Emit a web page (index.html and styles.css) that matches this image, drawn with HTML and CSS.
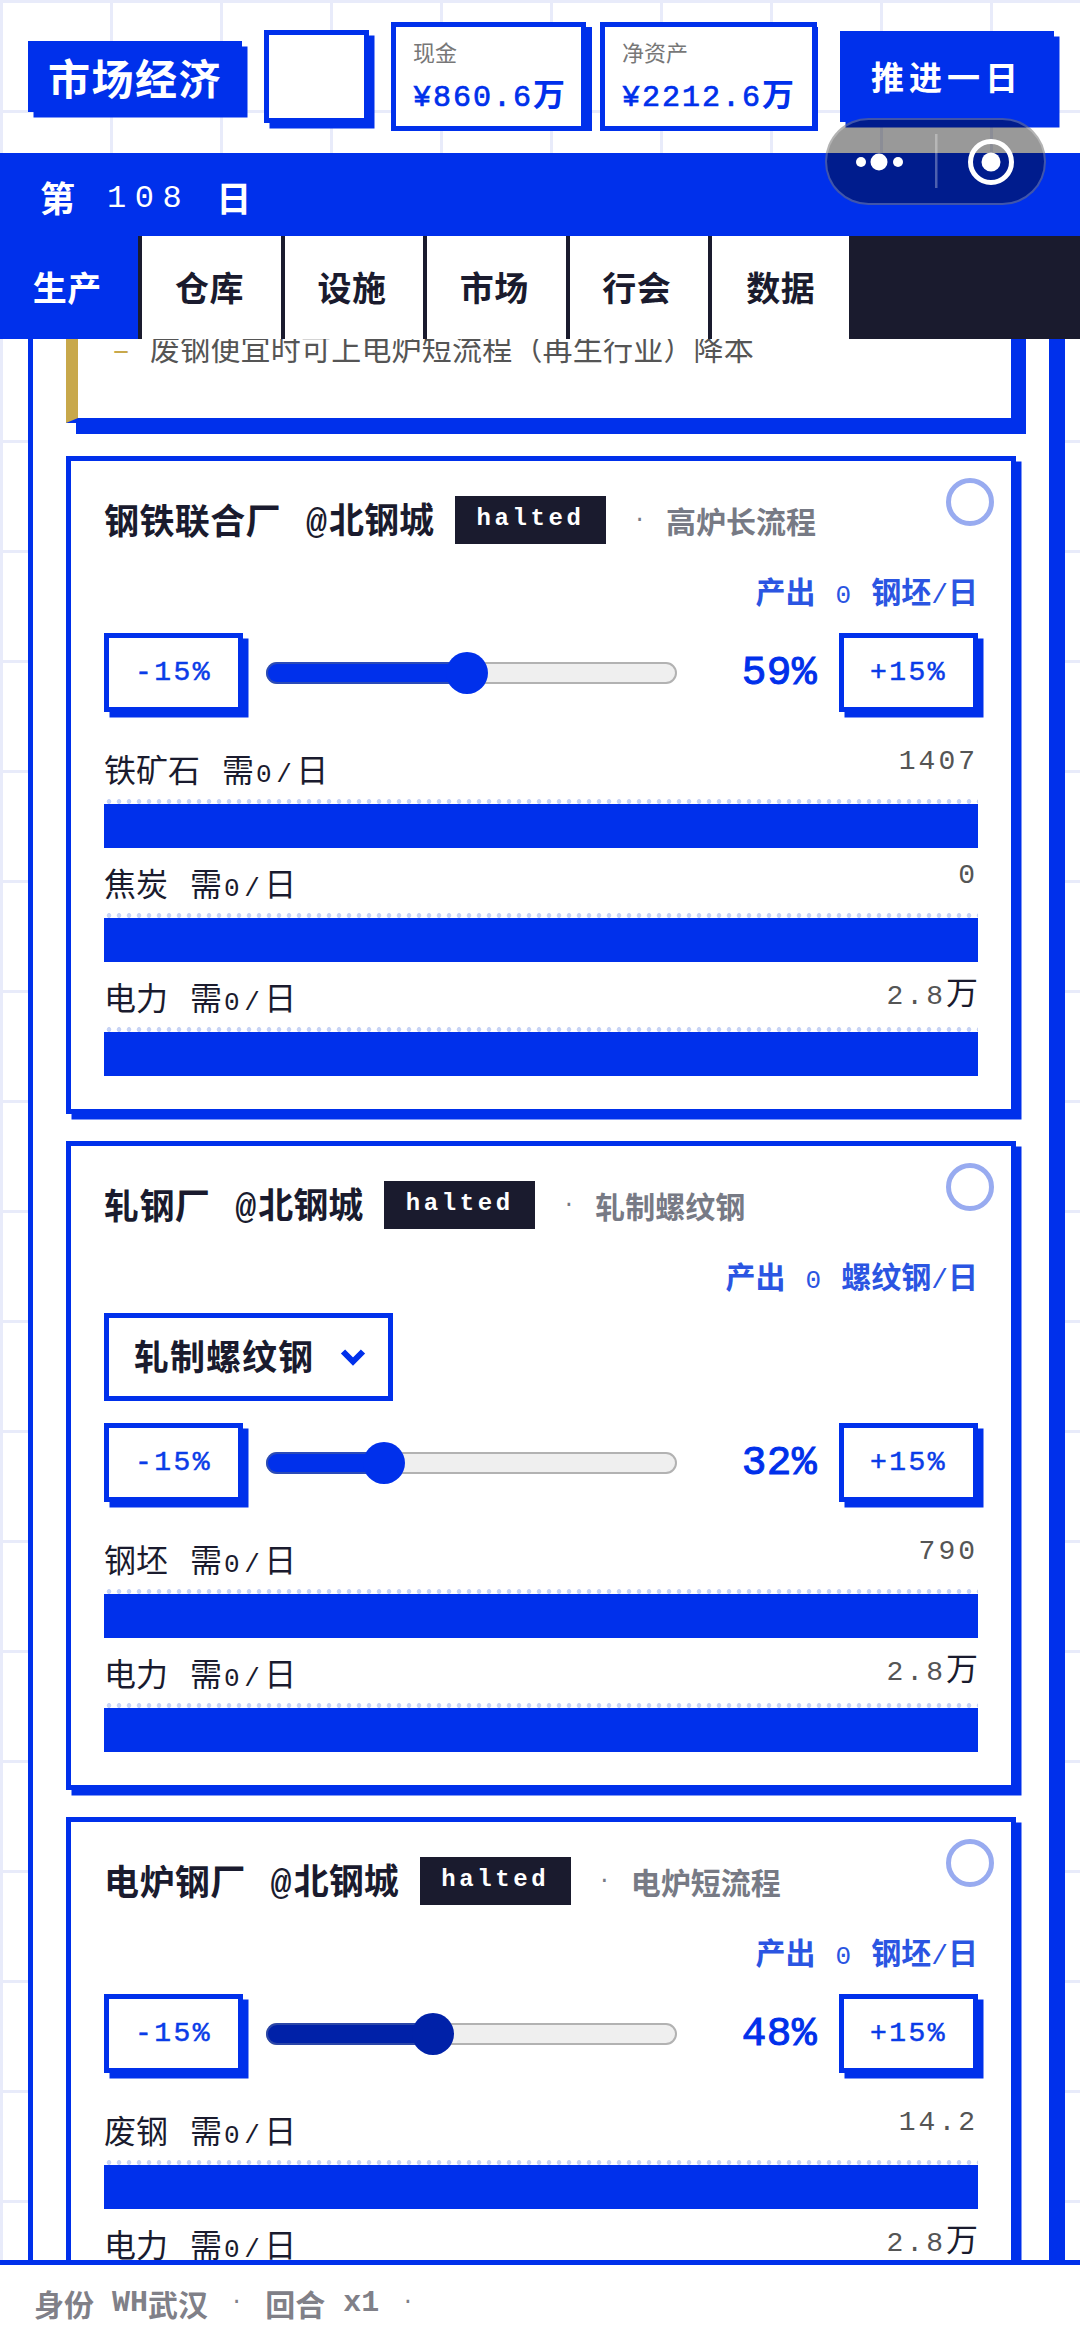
FILE: index.html
```html
<!DOCTYPE html>
<html lang="zh-CN">
<head>
    <meta charset="UTF-8">
    <meta name="viewport" content="width=device-width, initial-scale=1.0">
    <title>市场经济</title>
    <link rel="stylesheet" href="styles.css">
</head>
<body>
    <!-- Top bar -->
    <header class="header">
        <div class="top-row">
            <h1 class="brand">市场经济</h1>
            <div class="logo-box"></div>
            <div class="stats">
                <div class="stat">
                    <div class="stat-label">现金</div>
                    <div class="stat-value"><span class="num">¥860.6</span>万</div>
                </div>
                <div class="stat">
                    <div class="stat-label">净资产</div>
                    <div class="stat-value"><span class="num">¥2212.6</span>万</div>
                </div>
            </div>
            <button class="next-btn">推进一日</button>
        </div>
        <div class="day-band">
            <span>第</span>
            <span class="day-num">108</span>
            <span>日</span>
        </div>
        <nav class="tabs">
            <div class="tab active">生产</div>
            <div class="tab">仓库</div>
            <div class="tab">设施</div>
            <div class="tab">市场</div>
            <div class="tab">行会</div>
            <div class="tab last">数据</div>
        </nav>
        <!-- Mini program capsule -->
        <div class="capsule">
            <svg width="217" height="83" viewBox="0 0 217 83">
                <circle cx="34" cy="42" r="5" fill="#fff"/>
                <circle cx="52" cy="42" r="8.5" fill="#fff"/>
                <circle cx="71" cy="42" r="5" fill="#fff"/>
                <rect x="108" y="14" width="2.5" height="54" fill="#fff" opacity="0.3"/>
                <circle cx="164" cy="42" r="20.5" fill="none" stroke="#fff" stroke-width="5"/>
                <circle cx="164" cy="42" r="9.5" fill="#fff"/>
            </svg>
        </div>
    </header>

    <main class="main">
        <div class="panel">
            <div class="tip">
                <span class="tip-dash">–</span>
                <span>废钢便宜时可上电炉短流程（再生行业）降本</span>
            </div>

            <!-- Plant 1 -->
            <section class="plant">
                <div class="plant-ring"></div>
                <div class="plant-title">
                    <span class="plant-name">钢铁联合厂</span>
                    <span class="plant-city"><span class="at">@</span>北钢城</span>
                    <span class="tag">halted</span>
                    <span class="sep">·</span>
                    <span class="plant-route">高炉长流程</span>
                </div>
                <div class="output">产出<span class="output-num">0</span>钢坯<span class="output-slash">/</span>日</div>
                <div class="controls">
                    <button class="step-btn">-15%</button>
                    <div class="slider">
                        <div class="slider-fill" style="width: 49.4%"></div>
                        <div class="slider-thumb"></div>
                    </div>
                    <div class="pct">59%</div>
                    <button class="step-btn">+15%</button>
                </div>
                <div class="stock">
                    <div class="stock-head">
                        <div class="stock-label"><span>铁矿石</span><span class="need">需<span class="need-num">0/</span>日</span></div>
                        <div class="stock-value">1407</div>
                    </div>
                    <div class="stock-dots"></div>
                    <div class="stock-bar"></div>
                </div>
                <div class="stock">
                    <div class="stock-head">
                        <div class="stock-label"><span>焦炭</span><span class="need">需<span class="need-num">0/</span>日</span></div>
                        <div class="stock-value">0</div>
                    </div>
                    <div class="stock-dots"></div>
                    <div class="stock-bar"></div>
                </div>
                <div class="stock">
                    <div class="stock-head">
                        <div class="stock-label"><span>电力</span><span class="need">需<span class="need-num">0/</span>日</span></div>
                        <div class="stock-value">2.8<span class="unit">万</span></div>
                    </div>
                    <div class="stock-dots"></div>
                    <div class="stock-bar"></div>
                </div>
            </section>

            <!-- Plant 2 -->
            <section class="plant">
                <div class="plant-ring"></div>
                <div class="plant-title">
                    <span class="plant-name">轧钢厂</span>
                    <span class="plant-city"><span class="at">@</span>北钢城</span>
                    <span class="tag">halted</span>
                    <span class="sep">·</span>
                    <span class="plant-route">轧制螺纹钢</span>
                </div>
                <div class="output">产出<span class="output-num">0</span>螺纹钢<span class="output-slash">/</span>日</div>
                <div class="select">
                    <span class="select-text">轧制螺纹钢</span>
                    <svg class="select-arrow" width="26" height="18" viewBox="0 0 26 18">
                        <path d="M3 3.5 L13 13.5 L23 3.5" fill="none" stroke="#0030eb" stroke-width="6"/>
                    </svg>
                </div>
                <div class="controls">
                    <button class="step-btn">-15%</button>
                    <div class="slider">
                        <div class="slider-fill" style="width: 29%"></div>
                        <div class="slider-thumb"></div>
                    </div>
                    <div class="pct">32%</div>
                    <button class="step-btn">+15%</button>
                </div>
                <div class="stock">
                    <div class="stock-head">
                        <div class="stock-label"><span>钢坯</span><span class="need">需<span class="need-num">0/</span>日</span></div>
                        <div class="stock-value">790</div>
                    </div>
                    <div class="stock-dots"></div>
                    <div class="stock-bar"></div>
                </div>
                <div class="stock">
                    <div class="stock-head">
                        <div class="stock-label"><span>电力</span><span class="need">需<span class="need-num">0/</span>日</span></div>
                        <div class="stock-value">2.8<span class="unit">万</span></div>
                    </div>
                    <div class="stock-dots"></div>
                    <div class="stock-bar"></div>
                </div>
            </section>

            <!-- Plant 3 -->
            <section class="plant">
                <div class="plant-ring"></div>
                <div class="plant-title">
                    <span class="plant-name">电炉钢厂</span>
                    <span class="plant-city"><span class="at">@</span>北钢城</span>
                    <span class="tag">halted</span>
                    <span class="sep">·</span>
                    <span class="plant-route">电炉短流程</span>
                </div>
                <div class="output">产出<span class="output-num">0</span>钢坯<span class="output-slash">/</span>日</div>
                <div class="controls">
                    <button class="step-btn">-15%</button>
                    <div class="slider dragging">
                        <div class="slider-fill" style="width: 41%"></div>
                        <div class="slider-thumb"></div>
                    </div>
                    <div class="pct">48%</div>
                    <button class="step-btn">+15%</button>
                </div>
                <div class="stock">
                    <div class="stock-head">
                        <div class="stock-label"><span>废钢</span><span class="need">需<span class="need-num">0/</span>日</span></div>
                        <div class="stock-value">14.2</div>
                    </div>
                    <div class="stock-dots"></div>
                    <div class="stock-bar"></div>
                </div>
                <div class="stock">
                    <div class="stock-head">
                        <div class="stock-label"><span>电力</span><span class="need">需<span class="need-num">0/</span>日</span></div>
                        <div class="stock-value">2.8<span class="unit">万</span></div>
                    </div>
                    <div class="stock-dots"></div>
                    <div class="stock-bar"></div>
                </div>
            </section>
        </div>
    </main>

    <!-- Status footer -->
    <footer class="footer">
        <span class="foot-strong">身份</span>
        <span class="foot-num">WH</span><span class="foot-strong">武汉</span>
        <span class="foot-sep">·</span>
        <span class="foot-strong">回合</span>
        <span class="foot-num">x1</span>
        <span class="foot-sep">·</span>
    </footer>
</body>
</html>
```

FILE: styles.css
```css
/* General Styles */
* {
    box-sizing: border-box;
}

body {
    margin: 0;
    height: 100vh;
    overflow: hidden;
    display: flex;
    flex-direction: column;
    font-family: "Noto Sans CJK SC", "Noto Sans", sans-serif;
    color: #1a1b2e;
    background-color: #fff;
    background-image:
        linear-gradient(#e8ebfa 3px, transparent 3px),
        linear-gradient(90deg, #e8ebfa 3px, transparent 3px);
    background-size: 110px 110px;
}

button {
    font-family: inherit;
    padding: 0;
    cursor: pointer;
}

/* Header */
.header {
    position: relative;
    flex-shrink: 0;
    z-index: 2;
}

.top-row {
    height: 153px;
    padding: 0 26px 0 28px;
    display: flex;
    align-items: center;
    gap: 22px;
}

.brand {
    margin: 0;
    width: 214px;
    height: 71px;
    text-align: center;
    font-size: 42px;
    line-height: 71px;
    letter-spacing: 1.5px;
    font-weight: 700;
    color: #fff;
    background: #0030eb;
    box-shadow: 5.5px 5.5px 0 #0030eb;
}

.logo-box {
    width: 105px;
    height: 93px;
    background: #fff;
    border: 5px solid #0030eb;
    box-shadow: 5.5px 5.5px 0 #0030eb;
}

.stats {
    display: flex;
    gap: 14px;
    width: 427px;
    height: 109px;
    overflow: hidden;
}

.stat {
    height: 109px;
    padding: 9px 0 0 17px;
    background: #fff;
    border: 5px solid #0030eb;
    box-shadow: 6px 5px 0 #0030eb;
}

.stat:first-child {
    width: 195px;
}

.stat:last-child {
    width: 217px;
}

.stat-label {
    font-size: 22px;
    line-height: 30px;
    color: #777;
}

.stat-value {
    margin-top: 8px;
    font-size: 32px;
    line-height: 36px;
    font-weight: 700;
    color: #0030eb;
    white-space: nowrap;
}

.stat-value .num {
    font-family: "Liberation Mono", monospace;
    font-size: 30px;
    font-weight: 400;
    letter-spacing: 2px;
    -webkit-text-stroke: 0.7px #0030eb;
}

.next-btn {
    margin-left: auto;
    width: 214px;
    height: 91px;
    padding-bottom: 2px;
    border: none;
    background: #0030eb;
    color: #fff;
    font-size: 33px;
    font-weight: 700;
    letter-spacing: 5px;
    box-shadow: 5.5px 5.5px 0 #0030eb;
}

.day-band {
    height: 83px;
    padding: 3px 0 0 40px;
    display: flex;
    align-items: center;
    gap: 32px;
    background: #0030eb;
    color: #fff;
    font-size: 35px;
    font-weight: 700;
}

.day-num {
    margin: 5px -6px 0 0;
    font-family: "Liberation Mono", monospace;
    font-weight: 400;
    font-size: 32px;
    letter-spacing: 8.5px;
}

.tabs {
    height: 103px;
    display: flex;
    background: #1a1b2e;
}

.tab {
    width: 142.4px;
    padding: 0 4px 2px 0;
    display: flex;
    align-items: center;
    justify-content: center;
    font-size: 34px;
    letter-spacing: 0.5px;
    font-weight: 700;
    background: #fff;
    border-right: 4.5px solid #1a1b2e;
}

.tab.active {
    color: #fff;
    background: #0030eb;
}

.tab.last {
    width: 137.5px;
    padding-right: 0;
    border-right: none;
}

.capsule {
    position: absolute;
    top: 118px;
    left: 825px;
    width: 221px;
    height: 87px;
    border-radius: 44px;
    border: 2px solid rgba(255, 255, 255, 0.25);
    background: rgba(0, 0, 0, 0.4);
}

.capsule svg {
    display: block;
}

/* Main scrolled area */
.main {
    flex: 1;
    min-height: 0;
    overflow: hidden;
    z-index: 1;
}

.panel {
    width: 1026px;
    margin: -60px 0 0 28px;
    padding: 0 33px 40px;
    background: #fff;
    border-left: 5px solid #0030eb;
    border-right: 5px solid #0030eb;
    box-shadow: 11px 0 0 #0030eb;
}

.tip {
    display: flex;
    align-items: center;
    height: 144px;
    margin-bottom: 33px;
    padding: 44px 0 47px 35px;
    width: 950px;
    font-size: 30px;
    letter-spacing: 0.2px;
    line-height: 48px;
    color: #555;
    background: #fff;
    border-left: 12px solid #c8a84b;
    border-right: 5px solid #0030eb;
    border-bottom: 5px solid #0030eb;
    box-shadow: 10px 11px 0 #0030eb;
}

.tip-dash {
    width: 37px;
    color: #c8a84b;
    flex-shrink: 0;
}

/* Plant cards */
.plant {
    position: relative;
    width: 950px;
    margin-bottom: 27px;
    padding: 35px 33px 33px;
    background: #fff;
    border: 5px solid #0030eb;
    box-shadow: 5.5px 5.5px 0 #0030eb;
}

.plant-ring {
    position: absolute;
    top: 17px;
    right: 17px;
    width: 48px;
    height: 48px;
    border-radius: 50%;
    border: 5px solid #98abf0;
}

.plant-title {
    display: flex;
    align-items: center;
    height: 48px;
}

.plant-name,
.plant-city {
    position: relative;
    top: -2px;
    font-size: 35px;
    font-weight: 700;
    letter-spacing: 0.4px;
}

.plant-city {
    margin-left: 25px;
    letter-spacing: 0;
}

.at {
    font-family: "Liberation Mono", monospace;
    letter-spacing: 2px;
}

.tag {
    margin-left: 21px;
    width: 151px;
    height: 48px;
    line-height: 45px;
    text-align: center;
    font-family: "Liberation Mono", monospace;
    font-size: 24px;
    font-weight: 700;
    letter-spacing: 3.6px;
    color: #fff;
    background: #1a1b2e;
}

.sep {
    margin-left: 27px;
    width: 33px;
    font-family: "Liberation Mono", monospace;
    font-size: 22px;
    color: #777a85;
}

.plant-route {
    font-size: 30px;
    font-weight: 700;
    color: #777a85;
}

.output {
    margin: 24px 0 21px;
    height: 44px;
    line-height: 44px;
    text-align: right;
    font-size: 30px;
    font-weight: 700;
    color: #2b55e2;
}

.output-num,
.output-slash {
    font-family: "Liberation Mono", monospace;
    font-weight: 400;
}

.output-num {
    margin: 0 20px;
    font-size: 26px;
}

.output-slash {
    font-size: 28px;
}

.select {
    display: flex;
    align-items: center;
    width: 289px;
    height: 88px;
    margin-top: -5px;
    margin-bottom: 22px;
    padding-left: 25px;
    font-size: 35px;
    font-weight: 700;
    letter-spacing: 1px;
    border: 5px solid #0030eb;
}

.select-text {
    position: relative;
    top: -3px;
}

.select-arrow {
    margin-left: 26px;
}

/* Capacity controls */
.controls {
    display: flex;
    align-items: center;
}

.step-btn {
    width: 139px;
    height: 79px;
    background: #fff;
    border: 5px solid #0030eb;
    box-shadow: 5.5px 5.5px 0 #0030eb;
    font-family: "Liberation Mono", monospace;
    font-size: 28px;
    letter-spacing: 2.5px;
    color: #0a3ce8;
    -webkit-text-stroke: 0.5px #0a3ce8;
}

.slider {
    display: flex;
    align-items: center;
    width: 411px;
    height: 22px;
    margin-left: 23px;
    background: #efefef;
    border: 2px solid #b2b2b2;
    border-radius: 11px;
}

.slider-fill {
    height: 22px;
    margin-left: -2px;
    border-radius: 11px 0 0 11px;
    background: #0030eb;
    border: 2px solid #2b4bb8;
    border-right: none;
}

.slider-thumb {
    flex-shrink: 0;
    width: 42px;
    height: 42px;
    margin-left: -21px;
    border-radius: 50%;
    background: #0030eb;
}

.slider.dragging .slider-fill {
    background: #0021a8;
    border-color: #2b46a8;
}

.slider.dragging .slider-thumb {
    background: #0021a8;
}

.pct {
    flex: 1;
    margin-right: 22px;
    text-align: right;
    font-family: "Liberation Mono", monospace;
    font-size: 41px;
    letter-spacing: 0.5px;
    color: #0030eb;
    -webkit-text-stroke: 1px #0030eb;
}

/* Stock rows */
.controls + .stock {
    margin-top: 22px;
}

.stock-head {
    display: flex;
    justify-content: space-between;
    height: 65px;
    padding-top: 10px;
}

.stock-label {
    display: flex;
    font-size: 32px;
    line-height: 48px;
}

.need {
    margin-left: 22px;
}

.need-num {
    font-family: "Liberation Mono", monospace;
    font-size: 26px;
    letter-spacing: 4.5px;
    margin-left: 2px;
}

.stock-value {
    padding: 2px 3px 0 0;
    font-family: "Liberation Mono", monospace;
    font-size: 28px;
    line-height: 32px;
    letter-spacing: 3px;
    margin-right: -3px;
    color: #555;
}

.unit {
    font-family: "Noto Sans CJK SC", sans-serif;
    font-size: 32px;
    letter-spacing: 0;
    color: #1a1b2e;
}

.stock-dots {
    height: 5px;
    background-image: radial-gradient(circle at center, #c8d4f5 2.2px, transparent 2.6px);
    background-size: 10px 5px;
}

.stock-bar {
    height: 44px;
    background: #0030eb;
}

/* Footer */
.footer {
    flex-shrink: 0;
    height: 80px;
    padding-left: 34px;
    display: flex;
    align-items: center;
    background: #fff;
    border-top: 5px solid #0030eb;
    font-size: 30px;
    color: #808088;
}

.foot-strong {
    font-weight: 700;
}

.foot-num {
    margin-left: 18px;
    font-family: "Liberation Mono", monospace;
    font-size: 30px;
    font-weight: 700;
}

.foot-sep {
    margin: 0 22px;
    font-family: "Liberation Mono", monospace;
    font-size: 22px;
}
```
